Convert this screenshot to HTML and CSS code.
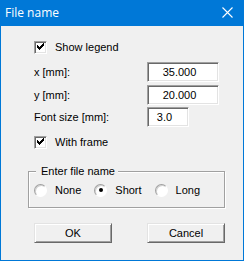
FILE: index.html
```html
<!DOCTYPE html>
<html>
<head>
<meta charset="utf-8">
<link rel="stylesheet" href="styles.css">
</head>
<body>
<div class="window">
  <div class="titlebar">
    <span class="title">File name</span>
    <svg class="close" width="11" height="11" viewBox="0 0 11 11"><path d="M0.5 0.5L10.5 10.5M10.5 0.5L0.5 10.5" stroke="#fff" stroke-width="1.1" fill="none"/></svg>
  </div>
  <div class="content">
    <div class="check-row">
      <span class="checkbox"><svg width="9" height="9" viewBox="0 0 9 9" shape-rendering="crispEdges"><path d="M1 2h1v3H1zM2 3h1v3H2zM3 4h1v3H3zM4 3h1v3H4zM5 2h1v3H5zM6 1h1v3H6zM7 0h1v3H7z" fill="#000"/></svg></span>
      <span class="label">Show legend</span>
    </div>
    <div class="field-row r1">
      <span class="label">x [mm]:</span>
      <input class="field wide" type="text" value="35.000">
    </div>
    <div class="field-row r2">
      <span class="label">y [mm]:</span>
      <input class="field wide" type="text" value="20.000">
    </div>
    <div class="field-row r3">
      <span class="label">Font size [mm]:</span>
      <input class="field narrow" type="text" value="3.0">
    </div>
    <div class="check-row r4">
      <span class="checkbox"><svg width="9" height="9" viewBox="0 0 9 9" shape-rendering="crispEdges"><path d="M1 2h1v3H1zM2 3h1v3H2zM3 4h1v3H3zM4 3h1v3H4zM5 2h1v3H5zM6 1h1v3H6zM7 0h1v3H7z" fill="#000"/></svg></span>
      <span class="label">With frame</span>
    </div>
    <div class="group">
      <span class="legend">Enter file name</span>
      <div class="radio-item"><span class="radio"></span><span class="label">None</span></div>
      <div class="radio-item"><span class="radio checked"></span><span class="label">Short</span></div>
      <div class="radio-item"><span class="radio"></span><span class="label">Long</span></div>
    </div>
    <div class="buttons">
      <button class="btn">OK</button>
      <button class="btn">Cancel</button>
    </div>
  </div>
</div>
</body>
</html>
```
FILE: styles.css
```css
html, body {
  margin: 0;
  padding: 0;
  background: #f0f0f0;
}
.window {
  width: 244px;
  height: 261px;
  box-sizing: border-box;
  border: 1px solid #0078d7;
  border-top: 0;
  background: #f0f0f0;
  font-family: "Liberation Sans", Arial, sans-serif;
  font-size: 11px;
  color: #000;
}
.titlebar {
  height: 26px;
  margin: 0 -1px;
  background: #0078d7;
  display: flex;
  align-items: center;
  justify-content: space-between;
  padding: 0 11px 0 5px;
}
.title {
  font-family: "Open Sans", "Noto Sans", sans-serif;
  font-size: 12px;
  color: #fff;
  line-height: 16px;
  margin-top: -1px;
}
.close {
  display: block;
  margin-top: -1px;
}
.content {
  padding: 15px 18px 0 27px;
}
.check-row {
  display: flex;
  align-items: center;
  height: 13px;
  line-height: 13px;
  margin-left: 6px;
  gap: 8px;
}
.checkbox {
  width: 13px;
  height: 13px;
  box-sizing: border-box;
  border: 1px solid;
  border-color: #a0a0a0 #fff #fff #a0a0a0;
  box-shadow: inset 1px 1px 0 #696969, inset -1px -1px 0 #e3e3e3;
  background: #fff;
  display: flex;
  align-items: center;
  justify-content: center;
}
.checkbox svg {
  display: block;
  margin: 0 0 0 0;
}
.field-row {
  display: grid;
  grid-template-columns: 113px auto;
  align-items: center;
  height: 20px;
  margin-left: 6px;
}
.r1 { margin-top: 8px; }
.r2 { margin-top: 3px; }
.r3 { margin-top: 2px; }
.r4 { margin-top: 9px; }
.field {
  appearance: none;
  -webkit-appearance: none;
  height: 20px;
  box-sizing: border-box;
  margin: 0;
  padding: 0 7px 0 0;
  border: 1px solid;
  border-color: #a0a0a0 #fff #fff #a0a0a0;
  box-shadow: inset 1px 1px 0 #696969, inset -1px -1px 0 #e3e3e3;
  background: #fff;
  font-family: "Liberation Sans", Arial, sans-serif;
  font-size: 11px;
  color: #000;
  text-align: center;
  outline: none;
}
.wide { width: 72px; }
.narrow { width: 42px; }
.group {
  position: relative;
  margin-top: 22px;
  height: 37px;
  box-sizing: border-box;
  border: 1px solid #a0a0a0;
  box-shadow: 1px 1px 0 #fff, inset 1px 1px 0 #fff;
  display: flex;
  align-items: center;
  padding: 1px 0 0 5px;
  gap: 13px;
}
.legend {
  position: absolute;
  left: 7px;
  top: -8px;
  padding: 0 3px 0 5px;
  background: #f0f0f0;
  line-height: 14px;
}
.radio-item {
  display: flex;
  align-items: center;
  gap: 8px;
  line-height: 13px;
}
.radio {
  width: 13px;
  height: 13px;
  box-sizing: border-box;
  border-radius: 50%;
  border: 1px solid;
  border-color: #a0a0a0 #fff #fff #a0a0a0;
  box-shadow: inset 1px 1px 0 #d0d0d0;
  background: #fff;
  display: flex;
  align-items: center;
  justify-content: center;
}
.radio.checked::after {
  content: "";
  width: 4px;
  height: 4px;
  border-radius: 50%;
  background: #000;
}
.buttons {
  display: flex;
  justify-content: space-between;
  margin: 15px 0 0 6px;
}
.btn {
  width: 78px;
  height: 20px;
  box-sizing: border-box;
  margin: 0;
  padding: 0;
  border: 1px solid;
  border-color: #e3e3e3 #696969 #696969 #e3e3e3;
  box-shadow: inset 1px 1px 0 #fff, inset -1px -1px 0 #a0a0a0;
  background: #f0f0f0;
  font-family: "Liberation Sans", Arial, sans-serif;
  font-size: 11px;
  color: #000;
  line-height: 16px;
}
```
